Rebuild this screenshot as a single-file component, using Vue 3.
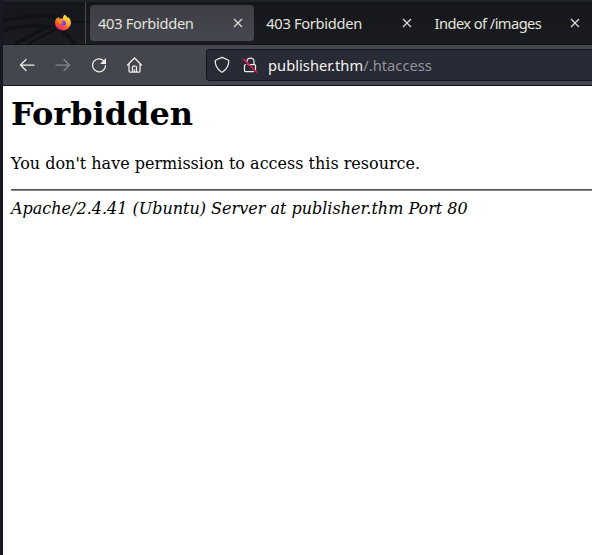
<script setup>
const tabs = [
  { title: '403 Forbidden', active: true, tracking: '-0.31px' },
  { title: '403 Forbidden', active: false, tracking: '-0.31px' },
  { title: 'Index of /images', active: false, tracking: '-0.57px' },
]
</script>

<template>
  <div class="browser">
    <header class="tabbar">
      <svg class="texture" width="250" height="42" viewBox="0 0 250 42" fill="none" aria-hidden="true">
        <g stroke="#111216" stroke-width="4">
          <path d="M0 18C17 16 34 13 50 13l9 15 13 14" />
          <path d="M0 28C17 25 32 22 44 25L12 42" />
          <path d="M25 42l28-15M64 21c13-3 26 0 45 1" stroke-width="2" />
        </g>
      </svg>
      <div class="pinned">
        <svg width="18" height="18" viewBox="0 0 18 18">
          <defs>
            <linearGradient id="flame" x1="14" y1="1" x2="5" y2="17" gradientUnits="userSpaceOnUse">
              <stop offset="0" stop-color="#fff44a" />
              <stop offset=".4" stop-color="#ffad28" />
              <stop offset=".68" stop-color="#ff5034" />
              <stop offset="1" stop-color="#ed1871" />
            </linearGradient>
          </defs>
          <path fill="url(#flame)" d="M10.6.8c1.8 1 2.7 2.3 3.3 3.5l.3-1.2C16.5 5 17.1 7.4 16.9 9.6A8 8 0 0 1 1 9.2c0-2.3.6-4.1 1.8-5.5l.4 1L4.8 2.7l.5 2 2-.3 1.8.2c-.2-1.7.4-3 1.5-3.8z" />
          <path fill="#8b48cf" d="M7 7c1-1 3-1 4.1-.1 1.4 1.1 1.5 3.4.1 4.5-1.8 1.5-4.4.5-5.2-1.3 1 .4 1.7.2 2.5-.4L6.8 8.7l1.7-.9z" />
          <path fill="#ff8928" d="M3.2 5l3.2.1 1.5 1.9 1.4.3-1.4 1.2-1.2 1.2-2.2-1.1z" />
        </svg>
      </div>
      <div class="tabs">
        <div v-for="(tab, index) in tabs" :key="index" class="tab" :class="{ active: tab.active }">
          <span :style="{ letterSpacing: tab.tracking }">{{ tab.title }}</span>
          <svg width="10" height="10" viewBox="0 0 10 10"><path d="M1 1l8 8M9 1L1 9" /></svg>
        </div>
      </div>
    </header>
    <nav class="toolbar">
      <div class="actions">
        <svg viewBox="0 0 18 18"><path d="M16 9H3M8 3.5L2.5 9 8 14.5" /></svg>
        <svg class="disabled" viewBox="0 0 18 18"><path d="M2 9h13M10 3.5l5.5 5.5-5.5 5.5" /></svg>
        <svg viewBox="0 0 18 18"><path d="M14.3 5.5A6.5 6.5 0 1 0 15.5 9.5" /><path class="solid" d="M16 2v6H10z" /></svg>
        <svg viewBox="0 0 18 18"><path d="M1.5 9L8.5 2l7 7M3 8v7q0 1 1 1h9q1 0 1-1V8M6.5 16v-5q0-1 1-1h2q1 0 1 1v5M8.5 13.8V16" /></svg>
      </div>
      <div class="address">
        <svg class="shield" viewBox="0 0 18 18"><path d="M9 1.4L15.1 4q.7.3.7 1c0 5-2 8.2-6.2 11q-.6.4-1.2 0C4.2 13.2 2.2 10 2.2 5q0-.7.7-1z" /></svg>
        <svg viewBox="0 0 18 18"><path d="M6 5.5a3.5 3.5 0 0 1 7 0V8.5M7 8.5h6.5q1 0 1 1v4M12.5 15.5h-8q-1 0-1-1v-5q0-1 1-1" /><path class="slash" d="M2.3 3l13.2 13" /></svg>
        <span class="url">publisher.thm<span>/.htaccess</span></span>
      </div>
    </nav>
    <main>
      <h1>Forbidden</h1>
      <p>You don't have permission to access this resource.</p>
      <hr>
      <address>Apache/2.4.41 (Ubuntu) Server at publisher.thm Port 80</address>
    </main>
  </div>
</template>

<style>
body { margin: 0; overflow: hidden; }
</style>

<style scoped>
.browser {
  box-sizing: border-box;
  width: 592px;
  height: 555px;
  border-left: 3px solid #171822;
  background: #fff;
  overflow: hidden;
}
.tabbar {
  position: relative;
  box-sizing: border-box;
  display: flex;
  height: 45px;
  border-top: 2px solid #202229;
  border-bottom: 1px solid #111319;
  background: linear-gradient(#15161b, #1b1c22);
  overflow: hidden;
}
.texture { position: absolute; left: 0; top: 0; }
.pinned {
  position: relative;
  box-sizing: border-box;
  width: 83px;
  flex: none;
  border-right: 1px solid #4b4c51;
  padding: 12px 0 0 51px;
}
.pinned svg { display: block; }
.tabs {
  position: relative;
  display: flex;
  flex: none;
  gap: 4px;
  padding: 3px 0 0 4px;
}
.tab {
  box-sizing: border-box;
  display: flex;
  justify-content: space-between;
  align-items: center;
  width: 164.3px;
  height: 36px;
  flex: none;
  padding: 0 11px 0 8px;
  border-radius: 4px;
  color: #e3e3dd;
  font: 14.67px/20px "Noto Sans", sans-serif;
  white-space: nowrap;
}
.tab.active { background: linear-gradient(#3d3e44, #464850); }
.tab svg { stroke: #e3e3dd; fill: none; stroke-width: 1.1; }
.toolbar {
  box-sizing: border-box;
  display: flex;
  height: 41px;
  padding: 4px 0 4px 15px;
  border-bottom: 1px solid #15161f;
  background: #44464e;
}
.actions {
  display: flex;
  align-items: center;
  gap: 18px;
  width: 188px;
  flex: none;
}
.toolbar svg {
  width: 18px;
  height: 18px;
  flex: none;
  fill: none;
  stroke: #eeeee9;
  stroke-width: 1.25;
  stroke-linecap: round;
  stroke-linejoin: round;
}
.toolbar .disabled { stroke: #85868a; }
.toolbar .solid { fill: #eeeee9; stroke: none; }
.toolbar .slash { stroke: #ed164f; stroke-width: 1.6; }
.address {
  box-sizing: border-box;
  display: flex;
  align-items: center;
  flex: 1;
  height: 32px;
  padding-left: 6px;
  border: 1px solid #14151b;
  border-right: 0;
  border-radius: 4px 0 0 4px;
  background: #282a36;
}
.address .shield { margin-right: 10px; }
.url {
  margin-left: 9px;
  color: #f4f4ef;
  font: 14.67px/20px "Noto Sans", sans-serif;
  letter-spacing: .04px;
  white-space: nowrap;
}
.url span { color: #92939a; }
main {
  padding: 9px 0 0 8px;
  color: #000;
  font: 16px/19px "DejaVu Serif", serif;
}
h1 { margin: 0 0 21px; font-size: 32px; line-height: 38px; font-weight: 700; }
p { margin: 0; white-space: nowrap; }
hr { height: 0; margin: 16px 0 8px; border: 0; border-top: 1px solid #555; border-bottom: 1px solid #888; }
address { font-style: italic; white-space: nowrap; }
</style>
